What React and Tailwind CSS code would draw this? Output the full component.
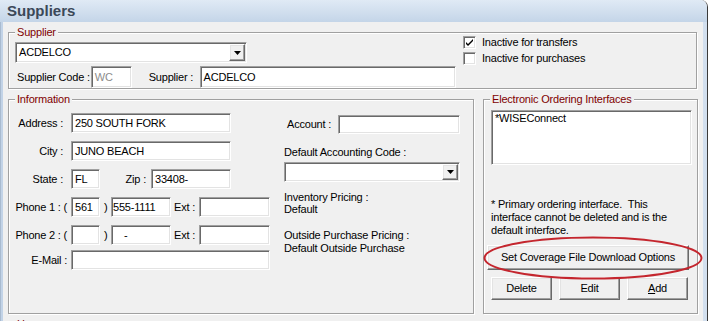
import React from 'react';

const sunken =
  'bg-white border border-t-[#a0a0a0] border-l-[#a0a0a0] border-r-white border-b-white shadow-[inset_1px_1px_0_#696969,inset_-1px_-1px_0_#e3e3e3]';
const raised =
  'bg-[#f0f0f0] border border-t-white border-l-white border-r-[#696969] border-b-[#696969] shadow-[inset_-1px_-1px_0_#a0a0a0,inset_1px_1px_0_#e3e3e3]';

function GroupBox({ label, className, children }) {
  return (
    <div className={`relative border border-[#a0a0a0] shadow-[1px_1px_0_#fff,inset_1px_1px_0_#fff] ${className}`}>
      <span className="absolute -top-[7px] left-[6px] bg-[#f0f0f0] px-[2px] leading-[13px] text-[#800000] whitespace-nowrap">
        {label}
      </span>
      {children}
    </div>
  );
}

function Arrow() {
  return (
    <svg width="7" height="4" viewBox="0 0 7 4">
      <polygon points="0,0 7,0 3.5,4" fill="#000" />
    </svg>
  );
}

function Combo({ value, className }) {
  return (
    <div className={`${sunken} ${className} flex items-center p-[1px]`}>
      <span className="flex-1 pl-[2px] leading-[13px] truncate">{value}</span>
      <div className={`${raised} w-[16px] h-full flex items-center justify-center`}>
        <Arrow />
      </div>
    </div>
  );
}

function Field({ value, className, muted }) {
  return (
    <div className={`${sunken} ${className} flex items-center pl-[3px] leading-[13px] whitespace-nowrap ${muted ? 'text-[#8c8c8c]' : ''}`}>
      {value}
    </div>
  );
}

function Check({ checked, label }) {
  return (
    <div className="flex items-center h-[13px] gap-[6px]">
      <div className={`${sunken} w-[13px] h-[13px] flex items-center justify-center`}>
        {checked && (
          <svg width="7" height="7" viewBox="0 0 7 7">
            <path d="M0 3 L0 5 L2 7 L7 2 L7 0 L2 5 Z" fill="#000" />
          </svg>
        )}
      </div>
      <span className="leading-[13px] whitespace-nowrap">{label}</span>
    </div>
  );
}

function Button({ children, className }) {
  return (
    <div className={`${raised} ${className} flex items-center justify-center leading-[13px] whitespace-nowrap`}>
      {children}
    </div>
  );
}

export default function App() {
  return (
    <div className="relative w-[708px] h-[321px] overflow-hidden bg-[#f0f0f0] rounded-tr-[7px] border-r border-[#3a3a3a] text-[11px] tracking-[-0.2px] text-black font-['Liberation_Sans',Arial,sans-serif]">
      {/* title bar */}
      <div className="h-[22px] flex items-center pl-[7px] bg-gradient-to-b from-[#e0eaf5] to-[#c4d5e8] text-[15px] font-bold tracking-normal text-[#3b4858]">
        Suppliers
      </div>

      <div className="flex h-[299px]">
        <div className="w-[3px] bg-[#c2d3e7] border-l border-[#a9bbd0]" />

        <div className="flex-1 flex flex-col">
          {/* Supplier */}
          <GroupBox label="Supplier" className="ml-[5px] mt-[10px] w-[689px] h-[59px] flex">
            <div className="pl-[6px] pt-[9px] w-[447px] flex flex-col">
              <Combo value="ACDELCO" className="w-[232px] h-[21px]" />
              <div className="mt-[3px] h-[22px] flex items-center">
                <span className="ml-[2px] w-[74px] whitespace-nowrap">Supplier Code :</span>
                <Field value="WC" muted className="w-[41px] h-[22px]" />
                <span className="ml-[17px] w-[51px] whitespace-nowrap">Supplier :</span>
                <Field value="ACDELCO" className="w-[257px] h-[22px]" />
              </div>
            </div>
            <div className="ml-[7px] pt-[3px] flex flex-col gap-[3px]">
              <Check checked label="Inactive for transfers" />
              <Check label="Inactive for purchases" />
            </div>
          </GroupBox>

          <div className="ml-[5px] mt-[10px] flex gap-[9px]">
            {/* Information */}
            <GroupBox label="Information" className="w-[466px] h-[215px] flex">
              <div className="w-[262px] pt-[13px] flex flex-col">
                <div className="h-[20px] flex items-center">
                  <span className="w-[62px] text-right pr-[8px]">Address :</span>
                  <Field value="250 SOUTH FORK" className="w-[160px] h-[20px]" />
                </div>
                <div className="mt-[8px] h-[20px] flex items-center">
                  <span className="w-[62px] text-right pr-[8px]">City :</span>
                  <Field value="JUNO BEACH" className="w-[160px] h-[20px]" />
                </div>
                <div className="mt-[8px] h-[20px] flex items-center">
                  <span className="w-[62px] text-right pr-[8px]">State :</span>
                  <Field value="FL" className="w-[29px] h-[20px]" />
                  <span className="w-[51px] text-right pr-[5px]">Zip :</span>
                  <Field value="33408-" className="w-[80px] h-[20px]" />
                </div>
                <div className="mt-[8px] h-[20px] flex items-center">
                  <span className="w-[62px] text-right pr-[4px] whitespace-nowrap">Phone 1 : (</span>
                  <Field value="561" className="w-[29px] h-[20px]" />
                  <span className="w-[11px] pl-[4px]">)</span>
                  <Field value="555-1111" className="w-[60px] h-[20px] !pl-[1px]" />
                  <span className="w-[28px] pl-[3px] whitespace-nowrap">Ext :</span>
                  <Field value="" className="w-[71px] h-[20px]" />
                </div>
                <div className="mt-[8px] h-[20px] flex items-center">
                  <span className="w-[62px] text-right pr-[4px] whitespace-nowrap">Phone 2 : (</span>
                  <Field value="" className="w-[29px] h-[20px]" />
                  <span className="w-[11px] pl-[4px]">)</span>
                  <Field value="-" className="w-[60px] h-[20px] !pl-[12px]" />
                  <span className="w-[28px] pl-[3px] whitespace-nowrap">Ext :</span>
                  <Field value="" className="w-[71px] h-[20px]" />
                </div>
                <div className="mt-[5px] h-[20px] flex items-center">
                  <span className="w-[62px] text-right pr-[4px]">E-Mail :</span>
                  <Field value="" className="w-[199px] h-[20px]" />
                </div>
              </div>

              <div className="ml-[13px] pt-[15px] flex flex-col">
                <div className="h-[19px] flex items-center">
                  <span className="w-[54px] pl-[3px] whitespace-nowrap">Account :</span>
                  <Field value="" className="w-[122px] h-[19px]" />
                </div>
                <div className="mt-[12px] leading-[13px] whitespace-nowrap">Default Accounting Code :</div>
                <Combo value="" className="mt-[3px] w-[176px] h-[20px]" />
                <div className="mt-[9px] leading-[12px] whitespace-nowrap">
                  <div>Inventory Pricing :</div>
                  <div>Default</div>
                </div>
                <div className="mt-[14px] leading-[13px] whitespace-nowrap">
                  <div>Outside Purchase Pricing :</div>
                  <div>Default Outside Purchase</div>
                </div>
              </div>
            </GroupBox>

            {/* Electronic Ordering Interfaces */}
            <GroupBox label="Electronic Ordering Interfaces" className="w-[215px] h-[215px] flex flex-col">
              <div className={`${sunken} ml-[7px] mt-[10px] w-[201px] h-[55px] pl-[3px] pt-[1px] leading-[13px]`}>
                *WISEConnect
              </div>
              <div className="ml-[7px] mt-[33px] leading-[13px] whitespace-nowrap">
                <div>* Primary ordering interface.&nbsp; This</div>
                <div>interface cannot be deleted and is the</div>
                <div>default interface.</div>
              </div>
              <Button className="ml-[3px] mt-[8px] w-[202px] h-[25px]">Set Coverage File Download Options</Button>
              <div className="ml-[7px] mt-[7px] flex gap-[7px]">
                <Button className="w-[61px] h-[23px]">Delete</Button>
                <Button className="w-[61px] h-[23px]">Edit</Button>
                <Button className="w-[61px] h-[23px]">
                  <span className="underline">A</span>dd
                </Button>
              </div>
            </GroupBox>
          </div>

          <GroupBox label="Hours" className="ml-[5px] mt-[10px] w-[689px] h-[40px]" />
        </div>

        <div className="w-[4px] bg-[#d2dfee]" />
      </div>

      {/* red highlight around the coverage button */}
      <svg className="absolute left-[483px] top-[236px]" width="220" height="44" viewBox="0 0 220 44">
        <ellipse cx="110" cy="22" rx="108.5" ry="20.5" fill="none" stroke="#c4262e" strokeWidth="2" />
      </svg>
    </div>
  );
}
